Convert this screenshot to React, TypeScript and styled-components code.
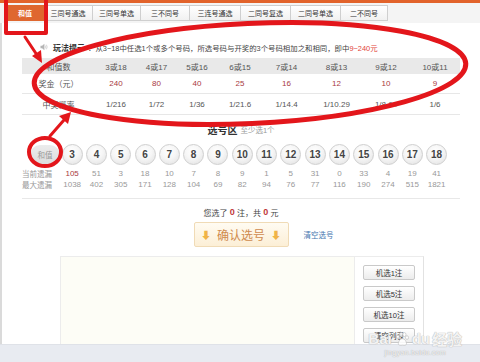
import React from "react"
import styled, { createGlobalStyle } from "styled-components"

const GlobalStyle = createGlobalStyle`
  html, body {
    margin: 0;
    padding: 0;
    background: #fff;
  }
  body {
    font-family: "Liberation Sans", "Noto Sans CJK SC", sans-serif;
    color: #333;
  }
`

const Page = styled.div`
  position: relative;
  width: 480px;
  height: 362px;
  overflow: hidden;
  display: flex;
  flex-direction: column;
`

const TopStrip = styled.div`
  height: 3px;
  background: #e2632b;
`

const TabBar = styled.div`
  display: flex;
  align-items: flex-start;
  height: 20px;
  box-sizing: border-box;
  padding: 2px 0 0 6px;
  background: #f4f4f4;
`

const Tab = styled.div<{ $active?: boolean; $w: number }>`
  width: ${p => p.$w}px;
  height: 16px;
  box-sizing: border-box;
  display: flex;
  align-items: center;
  justify-content: center;
  font-size: 7px;
  font-weight: ${p => (p.$active ? 700 : 400)};
  color: ${p => (p.$active ? "#fff" : "#333")};
  background: ${p => (p.$active ? "#df672f" : "linear-gradient(#ffffff, #f1f1f1)")};
  border: 1px solid ${p => (p.$active ? "#df672f" : "#cfcfcf")};
  border-left: ${p => (p.$active ? "1px solid #df672f" : "none")};
`

const Main = styled.div`
  flex: 1;
  display: flex;
  flex-direction: column;
  border-left: 2px solid #dadada;
  padding: 0 20px;
`

const Tip = styled.div`
  display: flex;
  align-items: center;
  height: 10px;
  margin-top: 19px;
  padding-left: 18px;
  font-size: 7.4px;
  color: #444;
  white-space: nowrap;
`

const TipTitle = styled.b`
  margin: 0 3px 0 5px;
  font-size: 8px;
  color: #333;
`

const Red = styled.span`
  color: #e2443a;
`

const Table = styled.div`
  display: grid;
  grid-template-columns: 73px 42px 39px 42px 44px 49px 51px 48px 50px;
  margin-top: 6px;
`

const Cell = styled.div<{ $head?: boolean; $red?: boolean; $h: number }>`
  height: ${p => p.$h}px;
  display: flex;
  align-items: center;
  justify-content: center;
  font-size: 8px;
  white-space: nowrap;
  color: ${p => (p.$red ? "#a93a3f" : "#555")};
  background: ${p => (p.$head ? "#e9e9e9" : "#fff")};
  border-bottom: ${p => (p.$head ? "none" : "1px solid #e7e7e7")};
`

const AreaTitle = styled.div`
  margin-top: 8px;
  height: 12px;
  display: flex;
  align-items: center;
  justify-content: center;
  gap: 3px;
  font-size: 10px;
  font-weight: 700;
  color: #333;
`

const AreaHint = styled.span`
  font-size: 7.5px;
  font-weight: 400;
  color: #999;
`

const NumGrid = styled.div`
  display: grid;
  grid-template-columns: 38px repeat(16, 24.3px);
  align-items: center;
`

const BallRow = styled(NumGrid)`
  margin-top: 9px;
  height: 21px;
`

const Pill = styled.div`
  justify-self: end;
  width: 30px;
  height: 20px;
  border-radius: 10px;
  background: linear-gradient(#ececec, #dcdcdc);
  color: #999;
  font-size: 7.5px;
  display: flex;
  align-items: center;
  justify-content: center;
`

const Ball = styled.div`
  justify-self: center;
  width: 21px;
  height: 21px;
  box-sizing: border-box;
  border-radius: 50%;
  border: 1px solid #cfcfcf;
  background: radial-gradient(circle at 45% 35%, #ffffff 0%, #f6f6f6 45%, #dedede 100%);
  display: flex;
  align-items: center;
  justify-content: center;
  font-size: 10px;
  font-weight: 700;
  color: #444;
`

const Stats = styled.div`
  margin-top: 3px;
  padding-bottom: 8px;
  border-bottom: 1px solid #e8e8e8;
`

const StatRow = styled(NumGrid)`
  height: 11px;
`

const StatLabel = styled.div`
  font-size: 7.5px;
  color: #999;
  white-space: nowrap;
`

const StatValue = styled.div<{ $red?: boolean }>`
  text-align: center;
  font-size: 8px;
  color: ${p => (p.$red ? "#a93a3f" : "#999")};
`

const Summary = styled.div`
  margin-top: 8px;
  height: 10px;
  display: flex;
  align-items: center;
  justify-content: center;
  font-size: 8px;
  color: #444;
  white-space: pre;
`

const Zero = styled.b`
  color: #c0393b;
  font-size: 9px;
`

const ActionRow = styled.div`
  margin-top: 5px;
  display: grid;
  grid-template-columns: 1fr auto 1fr;
  align-items: center;
`

const ConfirmButton = styled.div`
  grid-column: 2;
  width: 95px;
  height: 25px;
  box-sizing: border-box;
  border: 1px solid #f0dbb6;
  border-radius: 2px;
  background: linear-gradient(#fffbf2, #fcefd6);
  display: flex;
  align-items: center;
  justify-content: center;
  gap: 6px;
  font-size: 12px;
  color: #cf8a4e;
`

const Arrow = styled.span`
  color: #f0b347;
  font-size: 10px;
  font-weight: 700;
`

const ClearLink = styled.span`
  justify-self: start;
  margin-left: 15px;
  font-size: 7.5px;
  color: #3f74ae;
`

const PickBox = styled.div`
  flex: 1;
  display: flex;
  margin: 9px 0 0 38px;
  width: 364px;
`

const Pad = styled.div`
  flex: 1;
  background: #fdfdf6;
  border: 1px solid #ececec;
  border-bottom: none;
`

const SidePanel = styled.div`
  width: 69px;
  box-sizing: border-box;
  padding: 8px 0 0 8px;
  display: flex;
  flex-direction: column;
  gap: 6px;
  border-top: 1px solid #ececec;
  border-right: 1px solid #e2e2e2;
`

const SideButton = styled.div`
  width: 52px;
  height: 15px;
  box-sizing: border-box;
  border: 1px solid #c9c9c9;
  border-radius: 2px;
  background: linear-gradient(#ffffff, #ececec);
  display: flex;
  align-items: center;
  justify-content: center;
  font-size: 7.5px;
  color: #333;
`

const Footer = styled.div`
  height: 17px;
  background: #e8ebf1;
  border-top: 1px solid #dfe2e8;
`

const Watermark = styled.div`
  position: absolute;
  right: 18px;
  bottom: 6px;
  display: flex;
  flex-direction: column;
  align-items: center;
  color: rgba(255, 255, 255, 0.85);
  text-shadow: 0 0 1px #b5b5b5, 0 0 1px #b5b5b5;
  pointer-events: none;
`

const MarkTop = styled.div`
  display: flex;
  align-items: center;
  gap: 2px;
  font-size: 15px;
  font-weight: 700;
  font-family: "Liberation Sans", "Noto Sans CJK SC", sans-serif;
`

const MarkSub = styled.div`
  font-size: 7px;
  letter-spacing: 0.3px;
`

const Annotations = styled.svg`
  position: absolute;
  left: 0;
  top: 0;
  pointer-events: none;
`

const tabs = [
  { label: "和值", w: 38 },
  { label: "三同号通选", w: 49 },
  { label: "三同号单选", w: 48 },
  { label: "三不同号", w: 49 },
  { label: "三连号通选", w: 51 },
  { label: "二同号复选", w: 50 },
  { label: "二同号单选", w: 50 },
  { label: "二不同号", w: 47 },
]

const heads = ["和值数", "3或18", "4或17", "5或16", "6或15", "7或14", "8或13", "9或12", "10或11"]
const prizes = ["奖金（元）", "240", "80", "40", "25", "16", "12", "10", "9"]
const odds = ["中奖概率", "1/216", "1/72", "1/36", "1/21.6", "1/14.4", "1/10.29", "1/8.64", "1/6"]

const balls = Array.from({ length: 16 }, (_, i) => i + 3)
const current = [105, 51, 3, 18, 10, 7, 8, 9, 1, 5, 31, 0, 33, 4, 19, 41]
const maximum = [1038, 402, 305, 171, 128, 104, 69, 82, 94, 76, 77, 116, 190, 274, 515, 1821]

const Speaker = () => (
  <svg width="8" height="8" viewBox="0 0 8 8">
    <path d="M0.5 2.8h1.6L4.4 0.8v6.4L2.1 5.2H0.5z" fill="#b5b5b5" />
    <path d="M5.4 2.6q0.9 1.4 0 2.8M6.4 1.7q1.6 2.3 0 4.6" stroke="#c4c4c4" strokeWidth="0.7" fill="none" />
  </svg>
)

const Paw = () => (
  <svg width="16" height="16" viewBox="0 0 16 16">
    <g fill="rgba(255,255,255,0.85)" stroke="#b8b8b8" strokeWidth="0.6">
      <ellipse cx="4" cy="6" rx="1.6" ry="2" />
      <ellipse cx="7" cy="3.4" rx="1.6" ry="2" />
      <ellipse cx="10.4" cy="3.6" rx="1.6" ry="2" />
      <ellipse cx="13" cy="6.6" rx="1.5" ry="1.9" />
      <path d="M8.5 7.5c2 0 4 3 4 5s-2 2-4 1.6c-2 0.4-4.2 0.4-4.2-1.6s2.2-5 4.2-5z" />
    </g>
  </svg>
)

const RedMarks = () => (
  <Annotations width="480" height="362" viewBox="0 0 480 362">
    <g stroke="#e3161b" fill="none" strokeLinecap="round" strokeLinejoin="round">
      <rect x="6" y="-3" width="40" height="36" strokeWidth="4" />
      <path d="M25 37L37 55" strokeWidth="3" />
      <ellipse cx="250" cy="73.5" rx="216" ry="50" transform="rotate(-2.6 250 73.5)" strokeWidth="5" />
      <ellipse cx="45" cy="152" rx="16" ry="14" strokeWidth="4" />
      <path d="M50 136L64 120" strokeWidth="3" />
    </g>
    <g fill="#e3161b">
      <path d="M42 63L32 56L41 50z" />
      <path d="M71 112L68 124L59 116z" />
    </g>
  </Annotations>
)

export default function App() {
  return (
    <Page>
      <GlobalStyle />
      <TopStrip />
      <TabBar>
        {tabs.map((t, i) => (
          <Tab key={t.label} $w={t.w} $active={i === 0}>
            {t.label}
          </Tab>
        ))}
      </TabBar>
      <Main>
        <Tip>
          <Speaker />
          <TipTitle>玩法提示</TipTitle>
          ：从3~18中任选1个或多个号码，所选号码与开奖的3个号码相加之和相同，即中<Red>9~240元</Red>
        </Tip>
        <Table>
          {heads.map(h => (
            <Cell key={h} $head $h={16}>
              {h}
            </Cell>
          ))}
          {prizes.map((p, i) => (
            <Cell key={"p" + i} $h={19} $red={i > 0}>
              {p}
            </Cell>
          ))}
          {odds.map((o, i) => (
            <Cell key={"o" + i} $h={20}>
              {o}
            </Cell>
          ))}
        </Table>
        <AreaTitle>
          选号区<AreaHint>至少选1个</AreaHint>
        </AreaTitle>
        <BallRow>
          <Pill>和值</Pill>
          {balls.map(b => (
            <Ball key={b}>{b}</Ball>
          ))}
        </BallRow>
        <Stats>
          <StatRow>
            <StatLabel>当前遗漏</StatLabel>
            {current.map((v, i) => (
              <StatValue key={i} $red={i === 0}>
                {v}
              </StatValue>
            ))}
          </StatRow>
          <StatRow>
            <StatLabel>最大遗漏</StatLabel>
            {maximum.map((v, i) => (
              <StatValue key={i}>{v}</StatValue>
            ))}
          </StatRow>
        </Stats>
        <Summary>
          您选了 <Zero>0</Zero> 注，共 <Zero>0</Zero> 元
        </Summary>
        <ActionRow>
          <ConfirmButton>
            <Arrow>⬇</Arrow>
            确认选号
            <Arrow>⬇</Arrow>
          </ConfirmButton>
          <ClearLink>清空选号</ClearLink>
        </ActionRow>
        <PickBox>
          <Pad />
          <SidePanel>
            <SideButton>机选1注</SideButton>
            <SideButton>机选5注</SideButton>
            <SideButton>机选10注</SideButton>
            <SideButton>清空列表</SideButton>
          </SidePanel>
        </PickBox>
      </Main>
      <Footer />
      <Watermark>
        <MarkTop>
          Bai
          <Paw />
          du
          <span>经验</span>
        </MarkTop>
        <MarkSub>jingyan.baidu.com</MarkSub>
      </Watermark>
      <RedMarks />
    </Page>
  )
}
